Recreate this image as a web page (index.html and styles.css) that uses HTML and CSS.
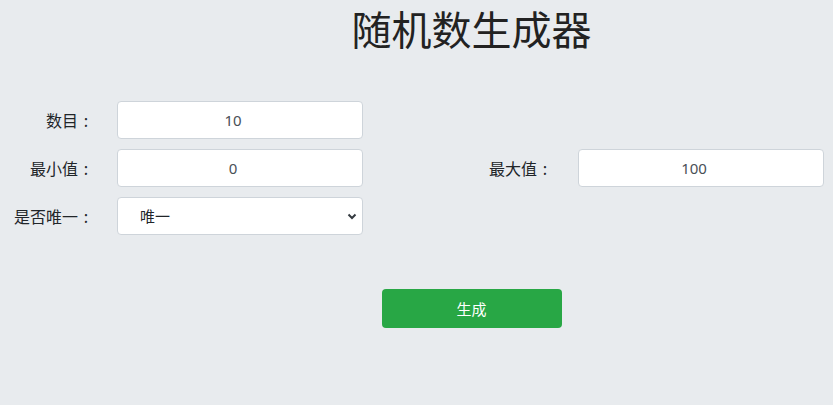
FILE: index.html
```html
<!DOCTYPE html>
<html lang="zh-CN">
<head>
    <meta charset="utf-8">
    <title>随机数生成器</title>
    <link rel="stylesheet" href="styles.css">
</head>
<body>
    <h1 class="title">随机数生成器</h1>

    <form class="generator">
        <div class="form-row">
            <label class="label" for="count">数目<span class="colon">:</span></label>
            <input class="field" id="count" type="text" value="10">
        </div>
        <div class="form-row">
            <label class="label" for="min">最小值<span class="colon">:</span></label>
            <input class="field" id="min" type="text" value="0">
            <label class="label label-wide" for="max">最大值<span class="colon">:</span></label>
            <input class="field" id="max" type="text" value="100">
        </div>
        <div class="form-row">
            <label class="label" for="unique">是否唯一<span class="colon">:</span></label>
            <select class="field select" id="unique">
                <option>唯一</option>
                <option>不唯一</option>
            </select>
        </div>

        <div class="actions">
            <button type="button" class="btn-generate">生成</button>
        </div>
    </form>
</body>
</html>
```

FILE: styles.css
```css
* {
    margin: 0;
    padding: 0;
    box-sizing: border-box;
}

body {
    font-family: "Noto Sans", "Noto Sans CJK SC", sans-serif;
    background-color: #e8ebee;
    color: #212529;
    overflow: hidden;
}

.title {
    margin-left: 110px;
    font-family: "Noto Sans CJK SC", sans-serif;
    font-size: 40px;
    line-height: 56px;
    font-weight: 400;
    text-align: center;
    color: #222;
}

.generator {
    padding-top: 45px;
}

.form-row {
    display: flex;
    align-items: center;
    height: 38px;
    margin-bottom: 10px;
}

.label {
    width: 94px;
    margin-right: 23px;
    font-family: "Noto Sans CJK SC", sans-serif;
    font-size: 16px;
    text-align: right;
    color: #212529;
}

/* full-width colon, dots in the middle */
.colon {
    display: inline-block;
    width: 16px;
    text-align: center;
}

.label-wide {
    width: 190px;
    margin-right: 25px;
}

.field {
    width: 246px;
    height: 38px;
    padding: 0 26px 0 12px;
    font-family: "Noto Sans", "Noto Sans CJK SC", sans-serif;
    font-size: 15px;
    color: #495057;
    text-align: center;
    background-color: #fff;
    border: 1px solid #ced4da;
    border-radius: 4px;
    outline: none;
}

.select {
    -webkit-appearance: none;
    appearance: none;
    padding-left: 22px;
    text-align: left;
    color: #212529;
    background-image: url("data:image/svg+xml,%3Csvg xmlns='http://www.w3.org/2000/svg' width='10' height='8' viewBox='0 0 10 8'%3E%3Cpath d='M1.5 2.5 5 6l3.5-3.5' fill='none' stroke='%23343a40' stroke-width='2'/%3E%3C/svg%3E");
    background-repeat: no-repeat;
    background-position: right 5px center;
}

.actions {
    display: flex;
    justify-content: center;
    padding-left: 110px;
    margin-top: 54px;
}

.btn-generate {
    width: 180px;
    height: 39px;
    font-family: "Noto Sans CJK SC", sans-serif;
    font-size: 15px;
    color: #fff;
    background-color: #28a745;
    border: none;
    border-radius: 4px;
    cursor: pointer;
}
```
